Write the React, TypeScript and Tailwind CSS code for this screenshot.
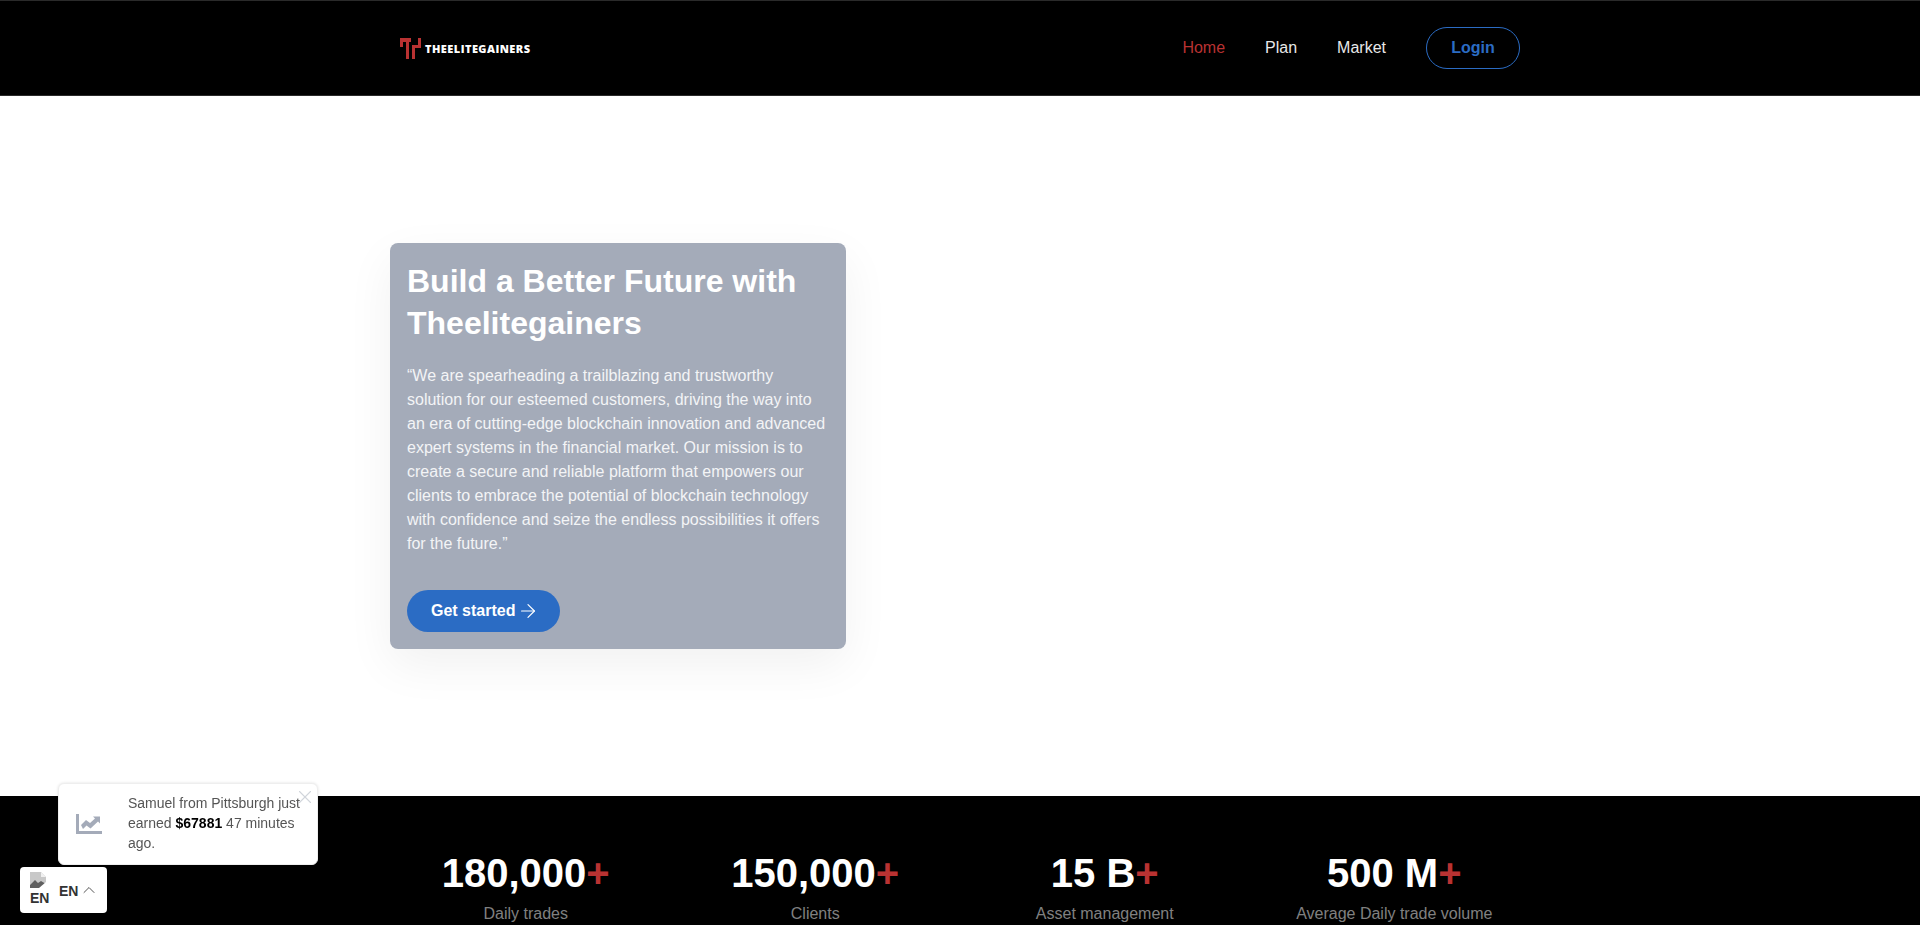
import { ArrowRight, ChevronUp, X } from "lucide-react";

const stats = [
  { value: "180,000", label: "Daily trades" },
  { value: "150,000", label: "Clients" },
  { value: "15 B", label: "Asset management" },
  { value: "500 M", label: "Average Daily trade volume" },
];

function Logo() {
  return (
    <div className="flex items-end gap-[4px]">
      <svg width="21" height="21" viewBox="0 0 21 21" fill="#b93232">
        <path d="M0 0h11v4h-2v17h-3v-17h-3v5h-3z" />
        <path d="M12 7h6V0h3v10h-6v11h-3z" />
      </svg>
      <span className="mb-[3px] font-['Open_Sans'] text-[11px] leading-[14px] font-extrabold tracking-[0.45px] text-white">
        THEELITEGAINERS
      </span>
    </div>
  );
}

function BrokenImage() {
  return (
    <svg width="16" height="16" viewBox="0 0 16 16" className="block">
      <path d="M0 0h11l5 5v11H0z" fill="#c8c8c8" />
      <path d="M11 0l5 5h-5z" fill="#f0f0f0" />
      <path d="M0 13l5-5 3 3 3-2 5 3v4H0z" fill="#5f5f5f" />
      <path d="M9 16l7-6v6z" fill="#ffffff" />
    </svg>
  );
}

function Navbar() {
  return (
    <header className="h-[96px] bg-black border-y border-[#2a2a2a]">
      <div className="w-[1140px] h-full mx-auto flex items-center justify-between pl-[10px]">
        <Logo />
        <nav className="flex items-center text-base">
          <a className="text-[#b93232]">Home</a>
          <a className="ml-10 text-[#e8e8e8]">Plan</a>
          <a className="ml-10 text-[#e8e8e8]">Market</a>
          <button className="ml-10 mr-[10px] w-[94px] h-[42px] rounded-full border border-[#2b6cc4] text-[#2b6cc4] font-bold">
            Login
          </button>
        </nav>
      </div>
    </header>
  );
}

function Hero() {
  return (
    <section className="h-[700px] bg-white">
      <div className="w-[1140px] mx-auto pt-[147px]">
        <div className="w-[456px] h-[406px] rounded-lg bg-[#a4abb9] px-[17px] pt-[17px] shadow-[0_16px_48px_rgba(0,0,0,0.06)]">
          <h1 className="text-[32px] leading-[42px] font-bold text-white">
            Build a Better Future with Theelitegainers
          </h1>
          <p className="mt-[20px] text-base leading-[24px] text-[#f3f4f6]">
            “We are spearheading a trailblazing and trustworthy solution for our esteemed customers, driving the way
            into an era of cutting-edge blockchain innovation and advanced expert systems in the financial market. Our
            mission is to create a secure and reliable platform that empowers our clients to embrace the potential of
            blockchain technology with confidence and seize the endless possibilities it offers for the future.”
          </p>
          <button className="mt-[34px] h-[42px] w-[153px] pl-[24px] rounded-full bg-[#2b6cc4] text-white font-bold flex items-center gap-[2px]">
            Get started
            <ArrowRight size={22} strokeWidth={1.3} />
          </button>
        </div>
      </div>
    </section>
  );
}

function Stats() {
  return (
    <section className="bg-black h-[300px] pt-[53px]">
      <div className="w-[1158px] mx-auto grid grid-cols-4">
        {stats.map((item) => (
          <div key={item.label} className="text-center">
            <h2 className="text-[40px] leading-[48px] font-bold text-white">
              {item.value}
              <span className="text-[#b93232]">+</span>
            </h2>
            <p className="mt-[5px] text-base leading-[24px] text-[#808080]">{item.label}</p>
          </div>
        ))}
      </div>
    </section>
  );
}

function Toast() {
  return (
    <div className="fixed left-[58px] top-[783px] w-[260px] h-[82px] rounded-md bg-white border border-[#eeeeee] flex items-start shadow-[0_0_3px_rgba(0,0,0,0.12)]">
      <svg width="26" height="20" viewBox="0 0 26 20" className="ml-[17px] mt-[30px] shrink-0" fill="#a4abb9">
        <path d="M0 0h3v17h23v3H0z" />
        <path d="M5 11l5-5 4 3 5-4.500-2-2h7v7l-2-2-7.500 7-4-3-3.500 3.500z" />
      </svg>
      <p className="ml-[26px] mt-[9px] w-[175px] text-sm leading-[20px] text-[#555555]">
        Samuel from Pittsburgh just earned <b className="text-black">$67881</b> 47 minutes ago.
      </p>
      <X size={22} strokeWidth={1.2} className="absolute left-[235px] top-[2px] text-[#d1d5db]" />
    </div>
  );
}

function LanguagePicker() {
  return (
    <div className="fixed left-[20px] top-[867px] w-[87px] h-[46px] rounded-sm bg-white flex items-center pl-[10px] text-sm font-bold text-[#333333]">
      <div className="w-[19px] mb-[2px] leading-[16px]">
        <BrokenImage />
        <span className="block mt-[2px]">EN</span>
      </div>
      <span className="ml-[10px] mt-[2px]">EN</span>
      <ChevronUp size={20} strokeWidth={1.2} className="ml-[1px] text-[#555555]" />
    </div>
  );
}

export default function App() {
  return (
    <div className="h-screen overflow-hidden font-['Liberation_Sans',Arial,sans-serif]">
      <Navbar />
      <Hero />
      <Stats />
      <Toast />
      <LanguagePicker />
    </div>
  );
}
